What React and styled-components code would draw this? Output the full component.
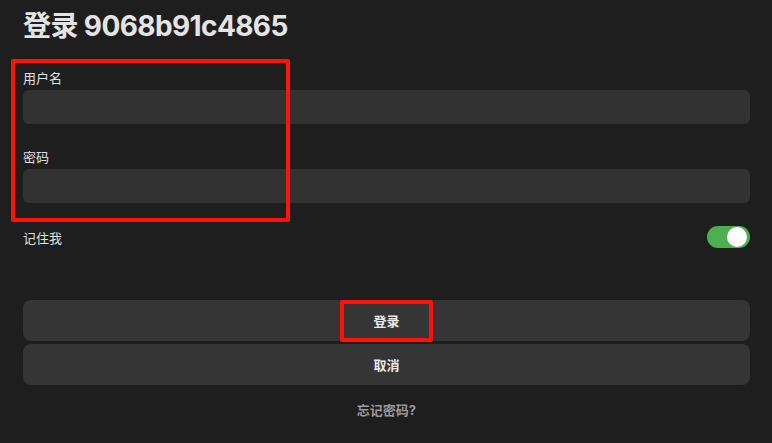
import React, { useState } from 'react'
import styled, { createGlobalStyle } from 'styled-components'

const GlobalStyle = createGlobalStyle`
  html, body {
    margin: 0;
    padding: 0;
    background: #1e1e1e;
  }
  body {
    font-family: "Inter", "Noto Sans CJK SC", sans-serif;
    color: #e2e2e2;
  }
`

export default function App() {
  const [remember, setRemember] = useState(true)

  return (
    <>
      <GlobalStyle />
      <PageStyled>
        <TitleStyled>登录 9068b91c4865</TitleStyled>

        <LabelStyled>用户名</LabelStyled>
        <InputStyled type="text" />

        <LabelStyled $spaced>密码</LabelStyled>
        <InputStyled type="password" />

        <RememberRowStyled>
          <RememberTextStyled>记住我</RememberTextStyled>
          <ToggleStyled $on={remember} onClick={() => setRemember(!remember)}>
            <KnobStyled $on={remember} />
          </ToggleStyled>
        </RememberRowStyled>

        <ButtonGroupStyled>
          <ButtonStyled>登录</ButtonStyled>
          <ButtonStyled>取消</ButtonStyled>
        </ButtonGroupStyled>

        <ForgotStyled>忘记密码?</ForgotStyled>

        {/* annotation frames drawn over the form */}
        <MarkStyled $left={11} $top={59} $width={279} $height={163} />
        <MarkStyled $left={340} $top={300} $width={93} $height={42} />
      </PageStyled>
    </>
  )
}

const PageStyled = styled.div`
  position: relative;
  display: flex;
  flex-direction: column;
  width: 727px;
  padding: 9px 22px 0 23px;
`

const TitleStyled = styled.h1`
  margin: 0;
  font-size: 28px;
  line-height: 34px;
  font-weight: 700;
  color: #e4e4e4;
  letter-spacing: -0.6px;
`

const LabelStyled = styled.label`
  display: block;
  margin: ${(p) => (p.$spaced ? '25px' : '27px')} 0 4px;
  font-size: 13px;
  line-height: 16px;
  color: #e0e0e0;
`

const InputStyled = styled.input`
  box-sizing: border-box;
  width: 100%;
  height: 34px;
  border: none;
  outline: none;
  border-radius: 6px;
  background: #323232;
  color: #e0e0e0;
  padding: 0 12px;
  font: inherit;
`

const RememberRowStyled = styled.div`
  display: flex;
  align-items: center;
  justify-content: space-between;
  margin-top: 23px;
  height: 22px;
`

const RememberTextStyled = styled.span`
  font-size: 13px;
  color: #e0e0e0;
`

const ToggleStyled = styled.div`
  position: relative;
  width: 43px;
  height: 22px;
  border-radius: 11px;
  background: ${(p) => (p.$on ? '#4caf50' : '#555')};
  cursor: pointer;
`

const KnobStyled = styled.div`
  position: absolute;
  top: 1px;
  left: ${(p) => (p.$on ? '20px' : '2px')};
  width: 20px;
  height: 20px;
  border-radius: 50%;
  background: #ffffff;
`

const ButtonGroupStyled = styled.div`
  display: flex;
  flex-direction: column;
  gap: 3px;
  margin-top: 52px;
`

const ButtonStyled = styled.button`
  height: 41px;
  border: none;
  border-radius: 8px;
  background: #353535;
  color: #e8e8e8;
  font-family: inherit;
  font-size: 13px;
  font-weight: 700;
  cursor: pointer;
`

const ForgotStyled = styled.a`
  display: block;
  margin-top: 17px;
  text-align: center;
  font-size: 13px;
  line-height: 16px;
  font-weight: 700;
  color: #9a9a9a;
  cursor: pointer;
`

const MarkStyled = styled.div`
  position: absolute;
  box-sizing: border-box;
  left: ${(p) => p.$left}px;
  top: ${(p) => p.$top}px;
  width: ${(p) => p.$width}px;
  height: ${(p) => p.$height}px;
  border: 4px solid #ff1208;
  border-radius: 2px;
  pointer-events: none;
`
